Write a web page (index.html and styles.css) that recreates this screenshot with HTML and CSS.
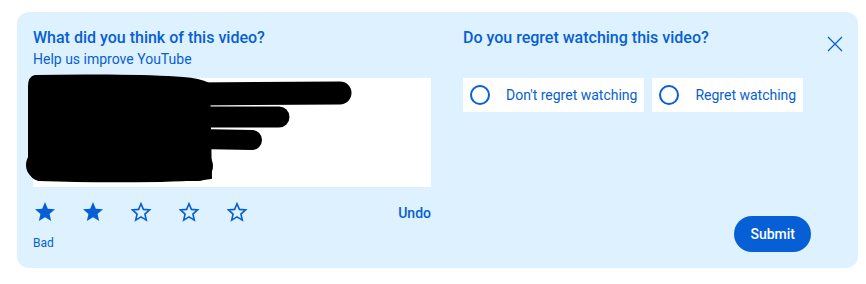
FILE: index.html
```html
<!DOCTYPE html>
<html lang="en">
<head>
<meta charset="utf-8">
<title>Feedback</title>
<link rel="stylesheet" href="styles.css">
</head>
<body>
<div class="card">
  <section class="col-left">
    <h2 class="title">What did you think of this video?</h2>
    <p class="subtitle">Help us improve YouTube</p>
    <div class="thumb">
      <svg class="redact" width="398" height="109" viewBox="0 0 398 109" aria-hidden="true">
        <g fill="#000" stroke="#000" stroke-linecap="round" stroke-linejoin="round">
          <path d="M2 -2 C40 -3 110 -3 150 0 C165 1 172 4 176 6 L178 100 C150 104 60 104 6 102 C0 100 -3 96 -4 90 L-4 8 C-4 2 -2 -1 2 -2 Z" stroke-width="2"/>
          <line x1="160" y1="16" x2="307" y2="15" stroke-width="23"/>
          <line x1="165" y1="39" x2="246" y2="39" stroke-width="21"/>
          <line x1="165" y1="61" x2="219" y2="62" stroke-width="20"/>
          <line x1="8" y1="87" x2="165" y2="88" stroke-width="30"/>
          <line x1="8" y1="20" x2="8" y2="90" stroke-width="26"/>
        </g>
      </svg>
    </div>
    <div class="rating">
      <div class="stars">
        <svg class="star" viewBox="0 0 24 24"><path class="fill" d="M12 17.27L18.18 21l-1.64-7.03L22 9.24l-7.19-.61L12 2 9.19 8.63 2 9.24l5.46 4.73L5.82 21z"/></svg>
        <svg class="star" viewBox="0 0 24 24"><path class="fill" d="M12 17.27L18.18 21l-1.64-7.03L22 9.24l-7.19-.61L12 2 9.19 8.63 2 9.24l5.46 4.73L5.82 21z"/></svg>
        <svg class="star" viewBox="0 0 24 24"><path class="line" d="M12 16.9L17.3 20.1l-1.4-6.05L20.6 9.95l-6.18-.53L12 3.7 9.58 9.42 3.4 9.95l4.7 4.1L6.7 20.1z"/></svg>
        <svg class="star" viewBox="0 0 24 24"><path class="line" d="M12 16.9L17.3 20.1l-1.4-6.05L20.6 9.95l-6.18-.53L12 3.7 9.58 9.42 3.4 9.950l4.7 4.1L6.7 20.1z"/></svg>
        <svg class="star" viewBox="0 0 24 24"><path class="line" d="M12 16.9L17.3 20.1l-1.4-6.05L20.6 9.95l-6.18-.53L12 3.7 9.58 9.42 3.4 9.95l4.7 4.1L6.7 20.1z"/></svg>
      </div>
      <button class="undo">Undo</button>
    </div>
    <div class="label">Bad</div>
  </section>
  <section class="col-right">
    <h2 class="title">Do you regret watching this video?</h2>
    <div class="options">
      <label class="option"><span class="radio"></span><span>Don't regret watching</span></label>
      <label class="option"><span class="radio"></span><span>Regret watching</span></label>
    </div>
    <button class="submit">Submit</button>
  </section>
  <button class="close" aria-label="Close">
    <svg viewBox="0 0 24 24" width="24" height="24"><path d="M5 5L19 19M19 5L5 19" stroke="#065fd4" stroke-width="1.3" fill="none"/></svg>
  </button>
</div>
</body>
</html>
```

FILE: styles.css
```css
* { box-sizing: border-box; }
html, body { margin: 0; padding: 0; background: #fff; }
body {
  font-family: Roboto, "Liberation Sans", sans-serif;
  color: #065fd4;
  padding: 12px 8px 0 17px;
}
.card {
  position: relative;
  width: 841px;
  height: 256px;
  background: #def1ff;
  border-radius: 12px;
  padding: 16px 47px 18px 16px;
  display: flex;
  gap: 32px;
}
.col-left {
  width: 398px;
  display: flex;
  flex-direction: column;
}
.col-right {
  flex: 1;
  display: flex;
  flex-direction: column;
}
.title {
  margin: 0;
  font-size: 16px;
  font-weight: 500;
  line-height: 20px;
  color: #065fd4;
}
.subtitle {
  margin: 1px 0 0;
  font-size: 14px;
  line-height: 20px;
}
.thumb {
  margin-top: 9px;
  height: 109px;
  background: #fff;
}
.redact { display: block; overflow: visible; }
.rating {
  margin-top: 13px;
  display: flex;
  align-items: center;
  justify-content: space-between;
  height: 24px;
}
.stars { display: flex; gap: 24px; }
.star { width: 24px; height: 24px; display: block; }
.star .fill { fill: #065fd4; }
.star .line { fill: none; stroke: #065fd4; stroke-width: 1.6; stroke-linejoin: miter; }
.undo {
  border: 0;
  background: none;
  padding: 0;
  font-family: inherit;
  font-size: 14px;
  font-weight: 500;
  color: #065fd4;
  line-height: 20px;
  margin-top: 1px;
}
.label {
  margin-top: 12px;
  font-size: 12px;
  line-height: 14px;
}
.options {
  margin-top: 30px;
  display: flex;
  gap: 8px;
}
.option {
  height: 34px;
  background: #fff;
  display: flex;
  align-items: center;
  gap: 16px;
  padding: 0 7px;
  font-size: 14px;
  line-height: 20px;
}
.option span:last-child { margin-top: -1px; }
.radio {
  width: 20px;
  height: 20px;
  border: 2px solid #065fd4;
  border-radius: 50%;
  flex: none;
}
.submit {
  margin-top: auto;
  margin-bottom: -2px;
  align-self: flex-end;
  height: 36px;
  padding: 0 16px 1px;
  border: 0;
  border-radius: 18px;
  background: #065fd4;
  color: #fff;
  font-family: inherit;
  font-size: 14px;
  font-weight: 500;
}
.close {
  position: absolute;
  top: 20px;
  right: 11px;
  width: 24px;
  height: 24px;
  padding: 0;
  border: 0;
  background: none;
}
.close svg { display: block; }
```
